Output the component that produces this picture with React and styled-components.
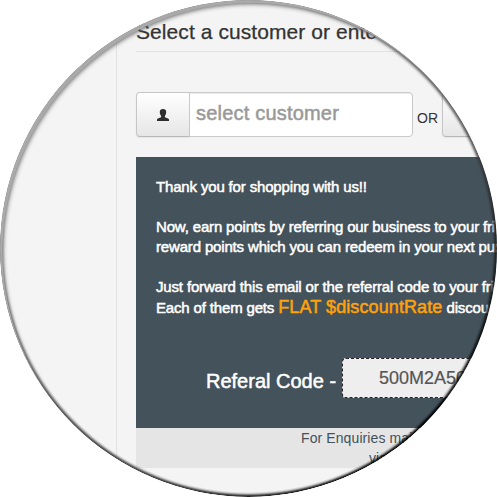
import React from "react";
import styled, { createGlobalStyle } from "styled-components";

const GlobalStyle = createGlobalStyle`
  * { box-sizing: border-box; }
  body {
    margin: 0;
    background: #fff;
    font-family: "Liberation Sans", Arial, sans-serif;
    color: #333;
  }
`;

const Lens = styled.main`
  position: relative;
  width: 497px;
  height: 497px;
  overflow: hidden;
  border-radius: 50%;
  background: #f4f4f4;
  display: flex;
`;

/* Soft inner shade plus a rim, lit from the upper left. */
const Rim = styled.div`
  position: absolute;
  inset: 0;
  border-radius: 50%;
  pointer-events: none;

  &::before,
  &::after {
    content: "";
    position: absolute;
    inset: 0;
    border-radius: 50%;
  }

  &::before {
    background: conic-gradient(
      rgba(150, 150, 150, 0.3) 0deg,
      rgba(90, 90, 90, 0.7) 40deg,
      rgba(30, 30, 30, 0.9) 90deg,
      #000 135deg,
      rgba(10, 10, 10, 0.9) 180deg,
      rgba(50, 50, 50, 0.85) 225deg,
      rgba(90, 90, 90, 0.6) 270deg,
      rgba(160, 160, 160, 0.2) 300deg,
      rgba(160, 160, 160, 0.2) 360deg
    );
    mask: radial-gradient(circle 248.5px, transparent 243.5px, rgba(0, 0, 0, 0.2) 245px, rgba(0, 0, 0, 0.8) 246.8px, #000 248px);
  }

  &::after {
    box-shadow:
      inset 2.5px 3px 0.5px rgba(172, 172, 172, 0.95),
      inset 3px 4px 4px rgba(85, 85, 85, 0.85);
  }
`;

const Sidebar = styled.aside`
  flex: 0 0 117px;
  border-right: 1px solid #e1e1e1;
`;

const Content = styled.section`
  flex: 0 0 620px;
  padding: 12px 0 0 19px;
`;

const Title = styled.h1`
  margin: 0 0 40px;
  height: 40px;
  border-bottom: 1px solid #e1e1e1;
  font-size: 21px;
  font-weight: 400;
  line-height: 40px;
  letter-spacing: 0.08px;
  white-space: nowrap;
  -webkit-text-stroke: 0.25px currentColor;
`;

const FormRow = styled.div`
  display: flex;
  height: 45px;
  margin-bottom: 20px;
`;

const Addon = styled.button`
  width: ${(p) => p.$width}px;
  height: 45px;
  padding: 0;
  display: grid;
  place-items: center;
  border: 1px solid #c6c6c6;
  border-bottom-color: #b8b8b8;
  border-radius: 4px 0 0 4px;
  background: linear-gradient(#fff, #e6e6e6);
  box-shadow: 0 1px 2px rgba(0, 0, 0, 0.06);
`;

const CustomerInput = styled.input`
  width: 224px;
  height: 45px;
  margin-left: -1px;
  padding: 0 6px 3px;
  border: 1px solid #c9c9c9;
  border-radius: 0 4px 4px 0;
  outline: 0;
  background: #fff;
  box-shadow: inset 0 1px 1px rgba(0, 0, 0, 0.075);
  font: 20px "Liberation Sans", Arial, sans-serif;
  letter-spacing: 0.2px;
  &::placeholder {
    color: #999;
    opacity: 1;
    -webkit-text-stroke: 0.5px #999;
  }
`;

const Or = styled.span`
  width: 29px;
  padding: 16px 0 0 4px;
  font-size: 14px;
  line-height: 20px;
`;

const Email = styled.article`
  height: 271px;
  padding: 20px;
  background: #44525b;
  color: #fff;
  font-size: 15px;
  line-height: 20px;
  -webkit-text-stroke: 0.5px currentColor;
`;

const Line = styled.p`
  margin: 0 0 ${(p) => p.$gap || 0}px;
  height: 20px;
  white-space: nowrap;
  letter-spacing: -0.16px;
`;

const Offer = styled.span`
  color: #ffa20b;
  font-size: 18px;
  letter-spacing: 0.1px;
`;

const CodeRow = styled.div`
  display: flex;
  margin: 41px 0 0 50px;
  height: 40px;
`;

const CodeLabel = styled.span`
  width: 136px;
  padding-top: 3px;
  font-size: 20px;
  line-height: 40px;
  white-space: nowrap;
`;

const Code = styled.div`
  width: 190px;
  height: 40px;
  padding-left: 36px;
  border: 1px dashed #222;
  border-radius: 4px;
  background: #eee;
  color: #555;
  font-size: 18px;
  line-height: 38px;
  -webkit-text-stroke: 0.2px currentColor;
`;

const Footer = styled.footer`
  height: 40px;
  background: #e5e5e5;
  color: #44525b;
  font-size: 14px;
  line-height: 20px;
`;

const FooterLine = styled.div`
  padding-left: ${(p) => p.$indent}px;
  letter-spacing: 0.1px;
`;

function UserIcon() {
  return (
    <svg width="12" height="12" viewBox="0 0 12 12" fill="#2d2d2d">
      <path d="M6 0C4 0 2.8.9 2.8 2.7c0 1.9.4 3.2 1.3 4v1.5L.9 9.5C.3 9.8 0 10.2 0 10.8V12h12v-1.2c0-.6-.3-1-.9-1.3L7.9 8.2V6.7c.9-.8 1.3-2.1 1.3-4C9.2.9 8 0 6 0Z" />
    </svg>
  );
}

export default function App() {
  return (
    <>
      <GlobalStyle />
      <Lens>
        <Sidebar />
        <Content>
          <Title>Select a customer or ente</Title>
          <FormRow>
            <Addon $width={54} aria-label="Customer">
              <UserIcon />
            </Addon>
            <CustomerInput placeholder="select customer" />
            <Or>OR</Or>
            <Addon $width={54} aria-label="New customer" />
          </FormRow>
          <Email>
            <Line $gap={20}>Thank you for shopping with us!!</Line>
            <Line>Now, earn points by referring our business to your fri</Line>
            <Line $gap={20}>reward points which you can redeem in your next pur</Line>
            <Line>Just forward this email or the referral code to your fri</Line>
            <Line>
              Each of them gets <Offer>FLAT $discountRate</Offer> discoun
            </Line>
            <CodeRow>
              <CodeLabel>Referal Code -</CodeLabel>
              <Code>500M2A50</Code>
            </CodeRow>
          </Email>
          <Footer>
            <FooterLine $indent={165}>For Enquiries mai</FooterLine>
            <FooterLine $indent={233}>via</FooterLine>
          </Footer>
        </Content>
        <Rim />
      </Lens>
    </>
  );
}
